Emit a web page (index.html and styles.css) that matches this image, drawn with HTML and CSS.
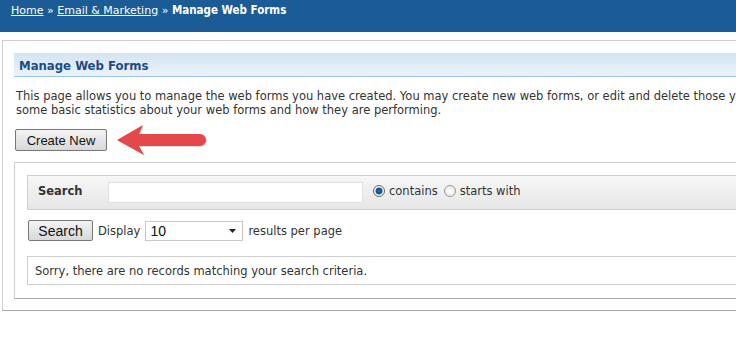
FILE: index.html
```html
<!DOCTYPE html>
<html lang="en">
  <head>
    <meta charset="UTF-8" />
    <title>Manage Web Forms</title>
    <link rel="stylesheet" href="styles.css">
  </head>
  <body>
    <div class="topbar">
      <a href="#">Home</a> &raquo; <a href="#">Email &amp; Marketing</a> &raquo; <strong>Manage Web Forms</strong>
    </div>

    <div class="panel">
      <h2 class="heading">Manage Web Forms</h2>
      <p class="intro">
        <span class="line">This page allows you to manage the web forms you have created. You may create new web forms, or edit and delete those you have already created. You can also view</span><br>
        some basic statistics about your web forms and how they are performing.
      </p>

      <div class="actions">
        <button class="btn btn-create">Create New</button>
        <svg class="arrow" width="100" height="40" viewBox="0 0 100 40">
          <path d="M6,20 L32,5 L28,14 L89,14 A6,6 0 0 1 89,26 L28,26 L33,35 Z" fill="#b0b0b0" opacity="0.5"/>
          <path d="M5,19 L31,4 L27,13 L88,13 A6,6 0 0 1 88,25 L27,25 L32,34 Z" fill="#e5484a"/>
        </svg>
      </div>

      <div class="listing">
        <div class="searchbar">
          <label class="search-label">Search</label>
          <input class="search-input" type="text">
          <span class="radio checked"></span><span class="radio-text">contains</span>
          <span class="radio"></span><span class="radio-text">starts with</span>
        </div>

        <div class="search-row">
          <button class="btn btn-search">Search</button>
          <span>Display</span>
          <div class="select">
            <span>10</span>
            <svg width="7" height="4" viewBox="0 0 7 4"><path d="M0,0 L7,0 L3.5,4 Z" fill="#222"/></svg>
          </div>
          <span>results per page</span>
        </div>

        <div class="message">Sorry, there are no records matching your search criteria.</div>
      </div>
    </div>
  </body>
</html>
```

FILE: styles.css
```css
body {
  margin: 0;
  font-family: "DejaVu Sans", Verdana, sans-serif;
  font-size: 11.5px;
  color: #333;
  background: #fff;
  overflow: hidden;
}
.topbar {
  height: 32px;
  box-sizing: border-box;
  padding: 3px 11px 0;
  background: #1b5b96;
  color: #fff;
  font-size: 11px;
  line-height: 14px;
}
.topbar a {
  color: #fff;
}
.topbar strong {
  font-family: "DejaVu Sans Condensed", "DejaVu Sans", sans-serif;
  font-size: 11.5px;
}
.panel {
  width: 900px;
  margin: 8px 0 0 2px;
  padding: 12px 12px 11px 11px;
  border: 1px solid #cfcfcf;
  border-bottom-color: #a8a8a8;
}
.heading {
  margin: 0;
  height: 23px;
  padding-left: 5px;
  background: linear-gradient(to bottom, #d3e4f2, #ebf3fa);
  border-bottom: 1px solid #9ec5e5;
  color: #1c4c84;
  font-family: "DejaVu Sans Condensed", "DejaVu Sans", sans-serif;
  font-size: 13px;
  font-weight: bold;
  line-height: 25px;
}
.intro {
  margin: 12px 0 0 2px;
  line-height: 14px;
  white-space: nowrap;
}
.actions {
  position: relative;
  margin-top: 12px;
  height: 22px;
}
.btn {
  font-family: "Liberation Sans", Arial, sans-serif;
  font-size: 13px;
  color: #111;
  background: linear-gradient(to bottom, #f4f4f4, #d8d8d8);
  border: 1px solid #777;
  border-radius: 2px;
  padding: 0;
}
.btn-create {
  width: 92px;
  height: 22px;
  margin-left: 1px;
}
.arrow {
  position: absolute;
  left: 98px;
  top: -8px;
}
.listing {
  margin-top: 11px;
  padding: 12px 12px 13px;
  border: 1px solid #cfcfcf;
  border-bottom-color: #a8a8a8;
}
.searchbar {
  display: flex;
  align-items: center;
  height: 30px;
  padding: 0 0 3px 10px;
  border: 1px solid #cfcfcf;
  background: linear-gradient(to bottom, #f7f7f7, #e6e6e6);
}
.search-label {
  width: 70px;
  font-weight: bold;
}
.search-input {
  width: 255px;
  height: 21px;
  box-sizing: border-box;
  margin: 3px 10px 0 0;
  border: 1px solid #e0e0e0;
  background: #fff;
}
.radio {
  width: 10px;
  height: 10px;
  border: 1px solid #9a9a9a;
  border-radius: 50%;
  background: radial-gradient(circle, #fff, #e4e4e4);
  margin-right: 4px;
}
.radio.checked {
  background: radial-gradient(circle, #1d6fb8 0, #0e4f8e 3px, #fff 4px, #e8e8e8 6px);
  border-color: #666;
}
.radio-text {
  margin-right: 6px;
}
.search-row {
  display: flex;
  align-items: center;
  gap: 5px;
  margin-top: 10px;
}
.btn-search {
  width: 65px;
  height: 21px;
  margin-left: 1px;
  font-size: 14px;
}
.select {
  display: flex;
  align-items: center;
  justify-content: space-between;
  width: 98px;
  height: 20px;
  box-sizing: border-box;
  padding: 0 6px 0 4px;
  border: 1px solid #c8c8c8;
  font-family: "Liberation Sans", Arial, sans-serif;
  font-size: 14px;
  color: #111;
}
.message {
  margin-top: 15px;
  height: 27px;
  padding-left: 7px;
  border: 1px solid #cfcfcf;
  line-height: 28px;
}
```
